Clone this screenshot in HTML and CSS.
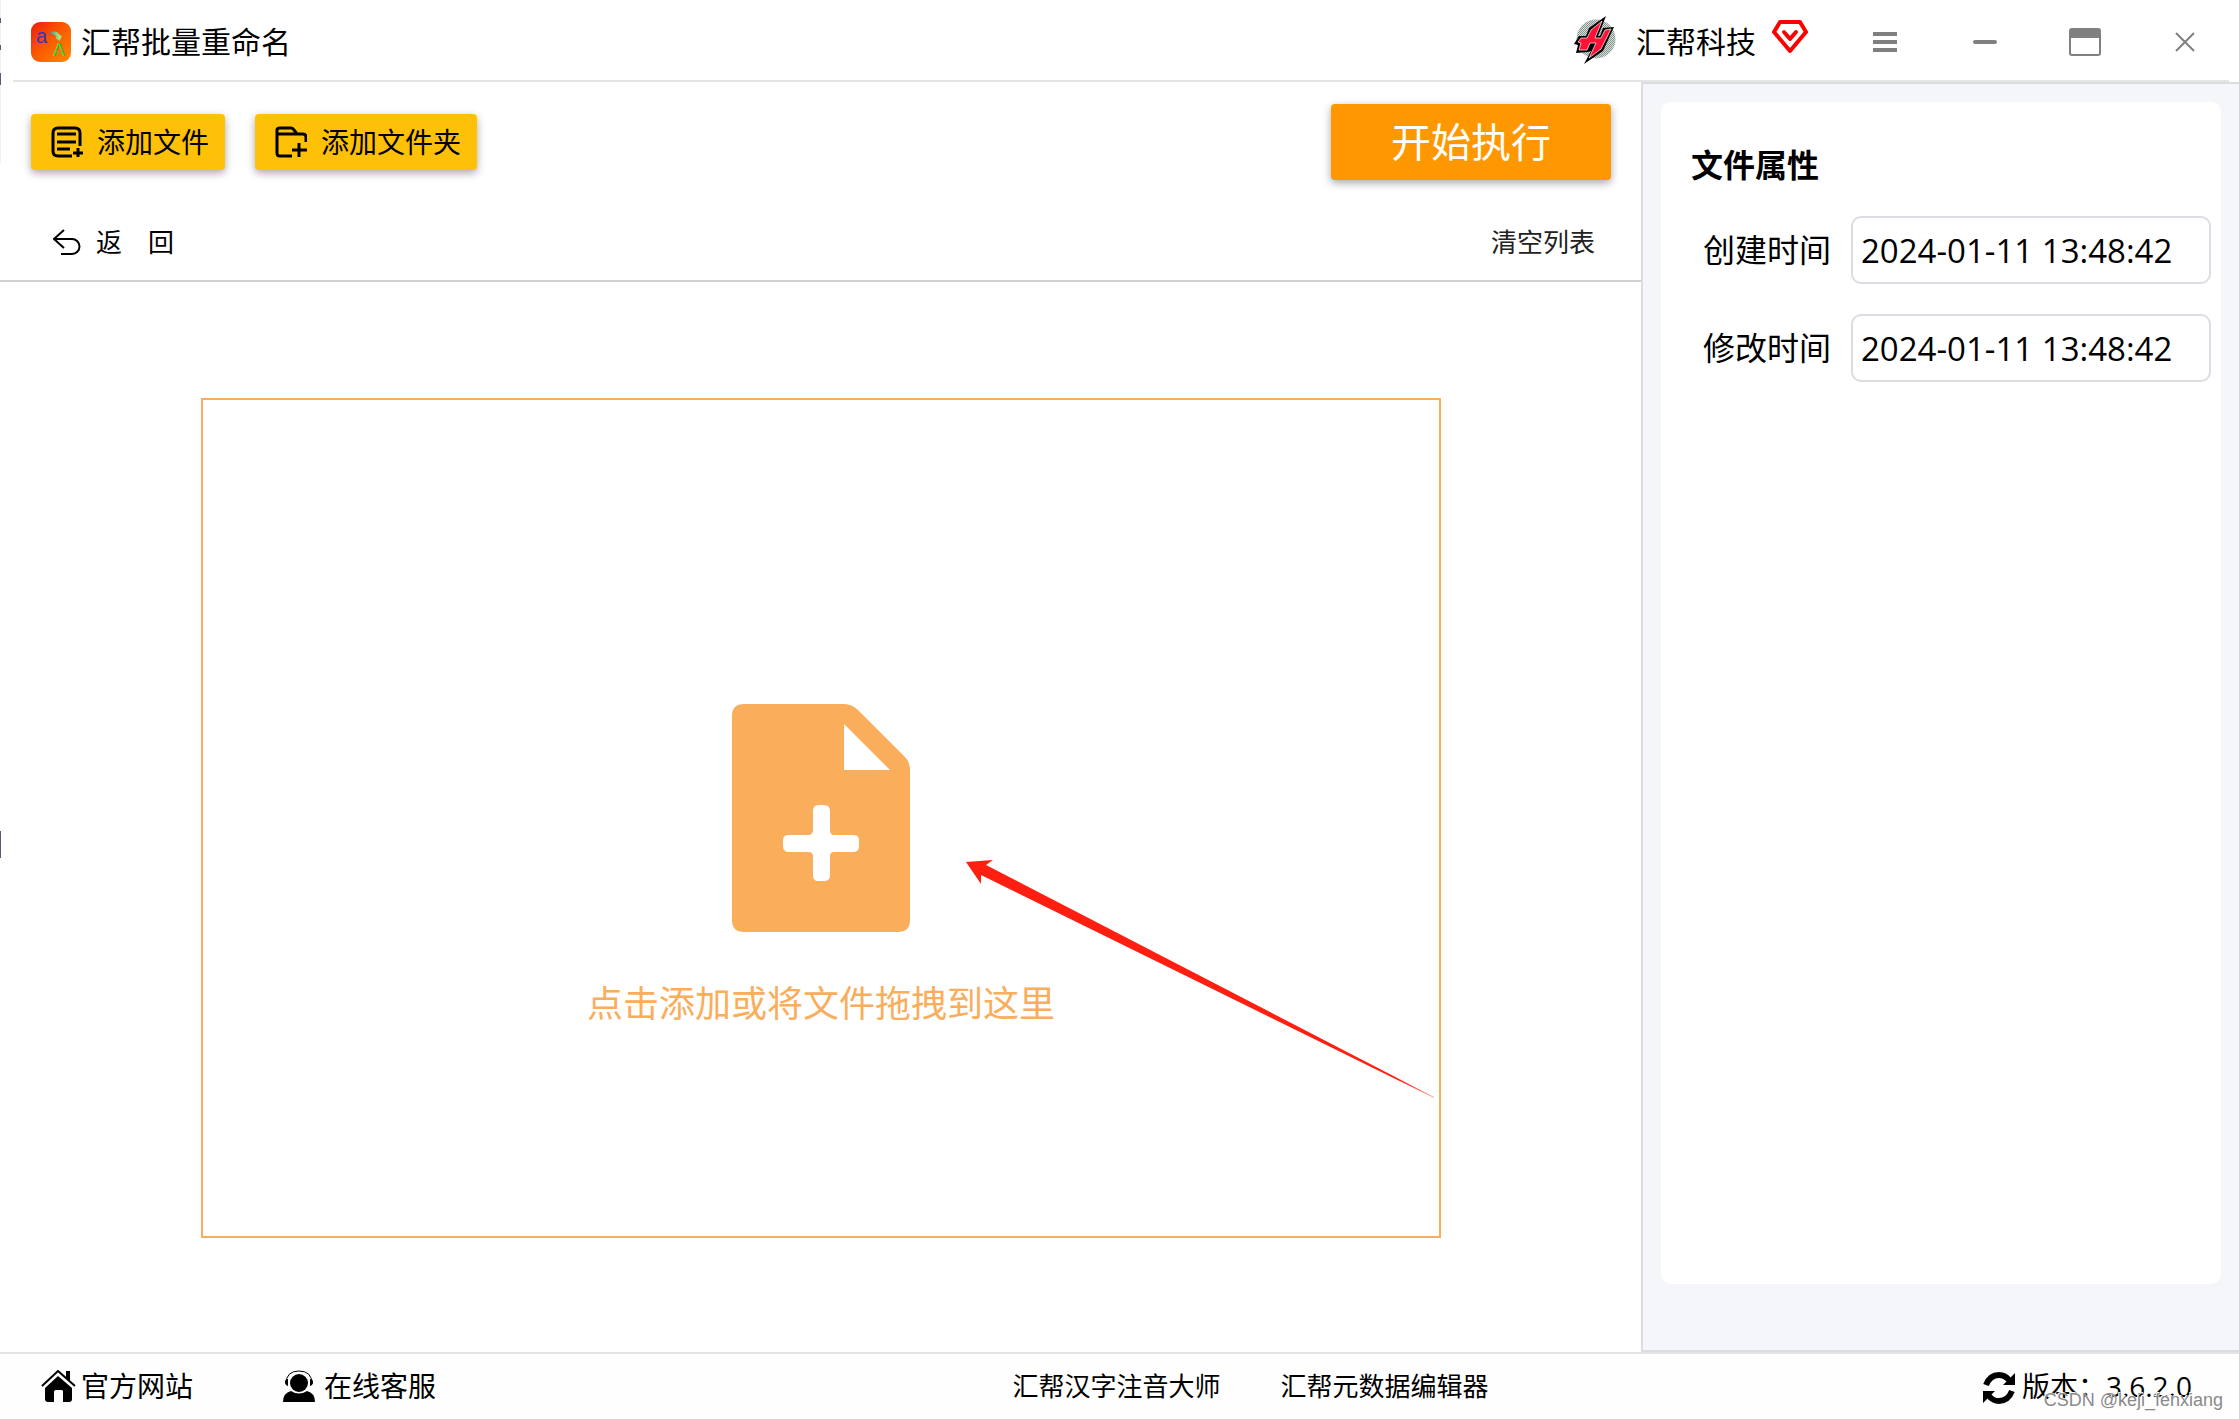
FILE: index.html
```html
<!DOCTYPE html>
<html lang="zh-CN">
<head>
<meta charset="utf-8">
<title>汇帮批量重命名</title>
<link rel="stylesheet" href="styles.css">
</head>
<body>
<div class="app">
  <header class="titlebar">
    <svg class="app-logo" viewBox="0 0 40 40" aria-hidden="true">
      <defs>
        <linearGradient id="logo-bg" x1="0" y1="0" x2="1" y2="1"><stop offset="0" stop-color="#ee1a0c"/><stop offset=".45" stop-color="#fa5800"/><stop offset="1" stop-color="#ff8a00"/></linearGradient>
        <linearGradient id="logo-arrow" x1="0" y1="0" x2="1" y2="0"><stop offset="0" stop-color="#2b6fc0"/><stop offset=".6" stop-color="#8fd47c"/><stop offset="1" stop-color="#b8f07c"/></linearGradient>
      </defs>
      <rect width="40" height="40" rx="9" fill="url(#logo-bg)"/>
      <path d="M17 13Q21 8 26 10L30 14L31 13.500L28.500 19L24 15.500L26 15Q22 10 17 13Z" fill="url(#logo-arrow)"/>
      <text x="5" y="21" class="logo-small">a</text>
      <text x="22" y="34" class="logo-big">A</text>
    </svg>
    <h1 class="app-name">汇帮批量重命名</h1>
    <a class="brand" href="#">
      <svg class="brand-logo" viewBox="0 0 42 48" aria-hidden="true">
        <defs><pattern id="dots" width="2" height="2" patternUnits="userSpaceOnUse"><rect width="2" height="2" fill="#d5dddb"/><path d="M0 0h1v1H0zM1 1h1v1H1z" fill="#87958f"/></pattern></defs>
        <circle cx="22" cy="23" r="19.500" fill="url(#dots)"/>
        <path d="M32 0L15 12L12 20L5 20L0 28L4 29L2 37L14 36L17 35L10 48L29 35L40 11L29 12L26 20L24 20Z" fill="#000"/>
        <path d="M28 5L17 14L13 22L7 22L4 26L7 27L5 34L13 34L16 27L22 27L15 42L27 33L37 13L31 14L27 22L21 22Z" fill="#ff1236" stroke="#fff" stroke-width=".7"/>
      </svg>
      <span>汇帮科技</span>
      <svg class="vip" viewBox="0 0 36 34" aria-hidden="true"><path d="M8 2H28L34 12L18 31L2 12Z" fill="none" stroke="#f00" stroke-width="4" stroke-linejoin="round"/><path d="M12 12L18 19L24 12" fill="none" stroke="#f00" stroke-width="4" stroke-linecap="round" stroke-linejoin="round"/></svg>
    </a>
    <nav class="window-controls">
      <button type="button" aria-label="菜单"><svg viewBox="0 0 36 32"><path d="M6 8H30M6 16H30M6 24H30" stroke="#808080" stroke-width="4"/></svg></button>
      <button type="button" aria-label="最小化"><svg viewBox="0 0 36 32"><path d="M8 16H28" stroke="#808080" stroke-width="4" stroke-linecap="round"/></svg></button>
      <button type="button" aria-label="最大化"><svg viewBox="0 0 36 32"><rect x="3" y="3" width="30" height="26" rx="2" fill="none" stroke="#808080" stroke-width="2"/><path d="M3 3H33V12H3Z" fill="#808080"/></svg></button>
      <button type="button" aria-label="关闭"><svg viewBox="0 0 36 32"><path d="M9 7L27 25M27 7L9 25" stroke="#808080" stroke-width="2"/></svg></button>
    </nav>
  </header>

  <div class="body">
    <main class="workspace">
      <div class="toolbar">
        <button type="button" class="btn">
          <svg viewBox="0 0 32 32"><path d="M21 30H7Q2 30 2 25V7Q2 2 7 2H24Q29 2 29 7V20M6 8H25M6 16H25M6 23H19M22 27H32M27 22V31" fill="none" stroke="#000" stroke-width="3"/></svg>
          添加文件
        </button>
        <button type="button" class="btn">
          <svg viewBox="0 0 32 32"><path d="M17 30H5Q2 30 2 27V4Q2 2 5 2H16Q18 2 19 4L22 8H28Q31 8 31 11V16M2 8H22M17 24H32M24 17V31" fill="none" stroke="#000" stroke-width="3"/></svg>
          添加文件夹
        </button>
        <button type="button" class="btn btn-run">开始执行</button>
      </div>
      <div class="list-bar">
        <button type="button" class="link-btn back">
          <svg viewBox="0 0 28 26"><path d="M11 1L1 10L11 19M1 10H19A7 7 0 0 1 19 25H8" fill="none" stroke="#000" stroke-width="2"/></svg>
          返　回
        </button>
        <button type="button" class="link-btn clear">清空列表</button>
      </div>
      <div class="drop-area">
        <button type="button" class="drop-zone">
          <svg class="file-icon" viewBox="0 0 178 228"><path fill-rule="evenodd" d="M12 0H112Q120 0 126 6L173 53Q178 58 178 66V216Q178 228 166 228H12Q0 228 0 216V12Q0 0 12 0ZM112 20V66H158ZM86 101Q81 101 81 107V126Q81 131 76 131H57Q51 131 51 136V142Q51 148 57 148H76Q81 148 81 152V171Q81 177 86 177H92Q98 177 98 171V152Q98 148 102 148H121Q127 148 127 142V136Q127 131 121 131H102Q98 131 98 126V107Q98 101 92 101Z" fill="#faad5b"/></svg>
          <span>点击添加或将文件拖拽到这里</span>
          <svg class="pointer" viewBox="0 0 468 238" aria-hidden="true"><defs><linearGradient id="tail"><stop offset=".92" stop-color="#ff1f10"/><stop offset="1" stop-color="#ff1f10" stop-opacity=".4"/></linearGradient></defs><path d="M0 2L27 0L20 5L468 237L468 238L15 15V24Z" fill="url(#tail)"/></svg>
        </button>
      </div>
    </main>

    <aside class="sidebar">
      <section class="card">
        <h2>文件属性</h2>
        <div class="field"><label for="created">创建时间</label><input id="created" type="text" value="2024-01-11 13:48:42"></div>
        <div class="field"><label for="modified">修改时间</label><input id="modified" type="text" value="2024-01-11 13:48:42"></div>
      </section>
    </aside>
  </div>

  <footer class="statusbar">
    <div class="support">
      <a href="#"><svg class="home" viewBox="0 0 35 32"><path d="M1 16L17 1L34 16" fill="none" stroke="#000" stroke-width="2"/><path d="M25 1H29V12L25 8ZM17 6L31 18V29Q31 32 28 32H22V21Q22 20 20 20H15Q13 20 13 22V32H7Q4 32 4 29V18Z"/></svg>官方网站</a>
      <a class="service" href="#"><svg viewBox="0 0 32 32"><circle cx="16" cy="13" r="9"/><path d="M3 14Q3 1 16 1T29 14" fill="none" stroke="#000" stroke-width="1"/><path d="M5 9V16Q2 15 2 12T5 9ZM27 9V16Q30 15 30 12T27 9ZM8 21Q16 26 24 21Q32 23 32 32H0Q0 23 8 21Z"/></svg>在线客服</a>
    </div>
    <div class="products">
      <a href="#">汇帮汉字注音大师</a>
      <a href="#">汇帮元数据编辑器</a>
    </div>
    <div class="version">
      <svg viewBox="0 0 32 32"><path d="M3 13Q7 3 16 3Q22 3 26 8M29 19Q25 29 16 29Q10 29 6 24" fill="none" stroke="#000" stroke-width="6"/><path d="M32 1V13H20ZM0 31V19H12Z"/></svg>
      <span>版本：3.6.2.0</span>
    </div>
    <span class="watermark">CSDN @keji_fenxiang</span>
  </footer>
</div>
</body>
</html>
```
FILE: styles.css
```css
* { box-sizing: border-box; }
body {
  margin: 0;
  background: #fff;
  color: #000;
  font-family: "Open Sans", "Noto Sans CJK SC", sans-serif;
  font-size: 28px;
  line-height: 40px;
}
svg { display: block; flex: none; }
a { color: inherit; text-decoration: none; }
button, input { font: inherit; color: inherit; }
button { border: 0; padding: 0; background: none; }

.app { position: relative; display: flex; flex-direction: column; min-height: 100vh; }

/* sliver of the window behind, along the left edge */
.app::before {
  content: "";
  position: absolute;
  inset: 0 auto 0 0;
  width: 1px;
  background:
    linear-gradient(#5a5a78, #5a5a78) 0 18px / 1px 5px no-repeat,
    linear-gradient(#5a5a78, #5a5a78) 0 45px / 1px 5px no-repeat,
    linear-gradient(#5a5a78, #5a5a78) 0 73px / 1px 12px no-repeat,
    linear-gradient(#5a5a6e, #5a5a6e) 0 831px / 1px 27px no-repeat,
    linear-gradient(#f0f0f2, #f0f0f2) 0 0 / 1px 163px no-repeat;
}

.titlebar {
  display: flex;
  align-items: center;
  height: 82px;
  margin: 0 10px 0 13px;
  padding: 4px 26px 0 18px;
  border-bottom: 2px solid #e4e4e4;
}
.app-logo { width: 40px; height: 40px; }
.logo-small, .logo-big { font-family: "Liberation Sans", sans-serif; }
.logo-small { font-size: 20px; fill: #3434c8; }
.logo-big { font-size: 18px; fill: #1fdc3c; }
.app-name { margin: 0 auto 0 10px; font-size: 30px; font-weight: 400; }
.brand { display: flex; align-items: center; font-size: 30px; }
.brand-logo { width: 42px; height: 48px; margin: 0 20px 4px 0; }
.vip { width: 36px; height: 34px; margin: 0 0 10px 16px; }
.window-controls { display: flex; gap: 64px; margin-left: 59px; }
.window-controls svg { width: 36px; height: 32px; }

.body { display: flex; flex: 1; }
.workspace { display: flex; flex: 1; flex-direction: column; }
.toolbar {
  display: flex;
  align-items: center;
  gap: 30px;
  padding: 22px 30px 20px 31px;
}
.btn {
  display: flex;
  align-items: center;
  gap: 14px;
  height: 56px;
  padding: 0 16px 0 20px;
  border-radius: 4px;
  background: #ffc107;
  box-shadow: 0 3px 8px rgba(0, 0, 0, .35);
}
.btn svg { width: 32px; height: 32px; }
.btn-run {
  justify-content: center;
  width: 280px;
  height: 76px;
  margin-left: auto;
  padding: 0;
  background: #ff9800;
  color: #fff;
  font-size: 40px;
}
.list-bar {
  display: flex;
  justify-content: space-between;
  height: 82px;
  padding: 4px 46px 0 53px;
  border-bottom: 2px solid #d0d0d0;
  font-size: 26px;
}
.link-btn { display: flex; align-items: center; gap: 15px; }
.back svg { width: 28px; height: 26px; }
.clear { color: #222; }

.drop-area { display: flex; flex: 1; padding: 116px 200px 114px 201px; }
.drop-zone {
  position: relative;
  display: flex;
  flex: 1;
  flex-direction: column;
  align-items: center;
  justify-content: center;
  gap: 46px;
  padding-top: 98px;
  border: 2px solid #faad5b;
  color: #faad5b;
  font-size: 36px;
  line-height: 52px;
}
.file-icon { width: 178px; height: 228px; }
.pointer { position: absolute; left: 763px; top: 460px; width: 468px; height: 238px; }

.sidebar {
  width: 598px;
  padding: 18px 18px 66px;
  border: 2px solid #dcdde1;
  border-right: 0;
  background: #f5f6f9;
}
.card { height: 100%; padding: 42px 10px 42px 30px; border-radius: 10px; background: #fff; }
.card h2 { margin: 0 0 30px; font-size: 32px; line-height: 42px; }
.field {
  display: flex;
  align-items: center;
  justify-content: space-between;
  margin: 0 0 30px 12px;
  font-size: 32px;
}
.field input {
  width: 360px;
  height: 68px;
  padding: 0 8px;
  border: 2px solid #dcdde2;
  border-radius: 10px;
  background: #fff;
  font-size: 33px;
}

.statusbar {
  position: relative;
  display: flex;
  align-items: center;
  justify-content: space-between;
  height: 67px;
  padding: 0 47px 2px 41px;
  border-top: 2px solid #e4e4e4;
  background: #fefefe;
}
.support, .products, .version, .support a { display: flex; align-items: center; }
.support { gap: 90px; }
.support a { gap: 5px; }
.support a.service { gap: 9px; }
.support svg, .version svg { width: 32px; height: 32px; }
.support svg.home { width: 35px; }
.products { gap: 60px; padding-left: 82px; font-size: 26px; }
.version { gap: 7px; }
.version svg { margin-top: 4px; }
.watermark {
  position: absolute;
  right: 16px;
  bottom: 9px;
  color: #8a8a8a;
  font: 18px/20px "Liberation Sans", sans-serif;
  text-shadow: -1px -1px 0 #fff;
}
```
